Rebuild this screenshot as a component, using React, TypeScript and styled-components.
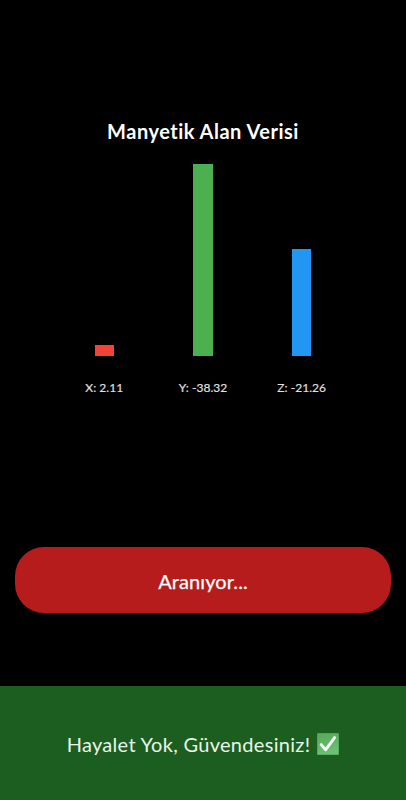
import React from 'react';
import styled, { createGlobalStyle } from 'styled-components';

const GlobalStyle = createGlobalStyle`
  * { box-sizing: border-box; }
  body { margin: 0; background: #000; }
`;

const Screen = styled.main`
  width: 406px;
  height: 800px;
  display: flex;
  flex-direction: column;
  overflow: hidden;
  background: #000;
  color: #fff;
  font-family: Lato, 'Noto Sans', sans-serif;
`;

const Title = styled.h1`
  margin: 117px 0 0;
  height: 28px;
  text-align: center;
  font-size: 20px;
  line-height: 28px;
  font-weight: 700;
  letter-spacing: 0.5px;
  white-space: nowrap;
`;

const Chart = styled.section`
  display: grid;
  grid-template-columns: repeat(3, 98.7px);
  justify-content: center;
  margin-top: 18.9px;
`;

const Column = styled.div`
  display: flex;
  flex-direction: column;
  align-items: center;
`;

const Track = styled.div`
  height: 191.8px;
  display: flex;
  align-items: flex-end;
`;

const Bar = styled.div<{ $height: number; $color: string }>`
  width: 19.4px;
  height: ${(p) => p.$height}px;
  background: ${(p) => p.$color};
`;

const Label = styled.span`
  margin-top: 23px;
  color: #e2e2e2;
  font-size: 12px;
  line-height: 18px;
  letter-spacing: 0.05px;
  white-space: nowrap;
  -webkit-text-stroke: 0.15px currentColor;
`;

const SearchButton = styled.button`
  margin: 150.5px 15px 0;
  height: 66px;
  padding: 2px 0 0;
  border: 0;
  border-radius: 29px;
  background: #b71c1c;
  color: #fff;
  font-family: inherit;
  font-size: 20px;
  letter-spacing: 0.1px;
  -webkit-text-stroke: 0.25px currentColor;
`;

const Status = styled.footer`
  margin-top: auto;
  height: 114.5px;
  padding-top: 2px;
  display: flex;
  align-items: center;
  justify-content: center;
  gap: 7px;
  background: #1b5e20;
  color: #e8f5e9;
  font-size: 20px;
  letter-spacing: 0.3px;
  white-space: nowrap;
`;

const CheckBox = styled.svg`
  width: 22px;
  height: 22px;
  flex: none;
`;

const readings = [
  { axis: 'X', value: '2.11', height: 10.7, color: '#f44336' },
  { axis: 'Y', value: '-38.32', height: 191.8, color: '#4caf50' },
  { axis: 'Z', value: '-21.26', height: 106.5, color: '#2196f3' },
];

export default function App() {
  return (
    <Screen>
      <GlobalStyle />
      <Title>Manyetik Alan Verisi</Title>
      <Chart>
        {readings.map((r) => (
          <Column key={r.axis}>
            <Track>
              <Bar $height={r.height} $color={r.color} />
            </Track>
            <Label>{`${r.axis}: ${r.value}`}</Label>
          </Column>
        ))}
      </Chart>
      <SearchButton>Aranıyor...</SearchButton>
      <Status>
        <span>Hayalet Yok, Güvendesiniz!</span>
        <CheckBox viewBox="0 0 22 22" aria-label="✅">
          <defs>
            <linearGradient id="tile" x1="0" y1="0" x2="0.3" y2="1">
              <stop offset="0" stopColor="#57a65c" />
              <stop offset="1" stopColor="#6cc173" />
            </linearGradient>
          </defs>
          <rect width="22" height="22" rx="0.8" fill="#43a04b" />
          <rect x="0.6" y="0.6" width="20.8" height="20.8" rx="0.5" fill="url(#tile)" />
          <path d="M4.2 11.6 L8.6 16.8 L17.6 4.6" fill="none" stroke="#f3f7f3" strokeWidth="2.9" strokeLinecap="round" strokeLinejoin="round" />
        </CheckBox>
      </Status>
    </Screen>
  );
}
